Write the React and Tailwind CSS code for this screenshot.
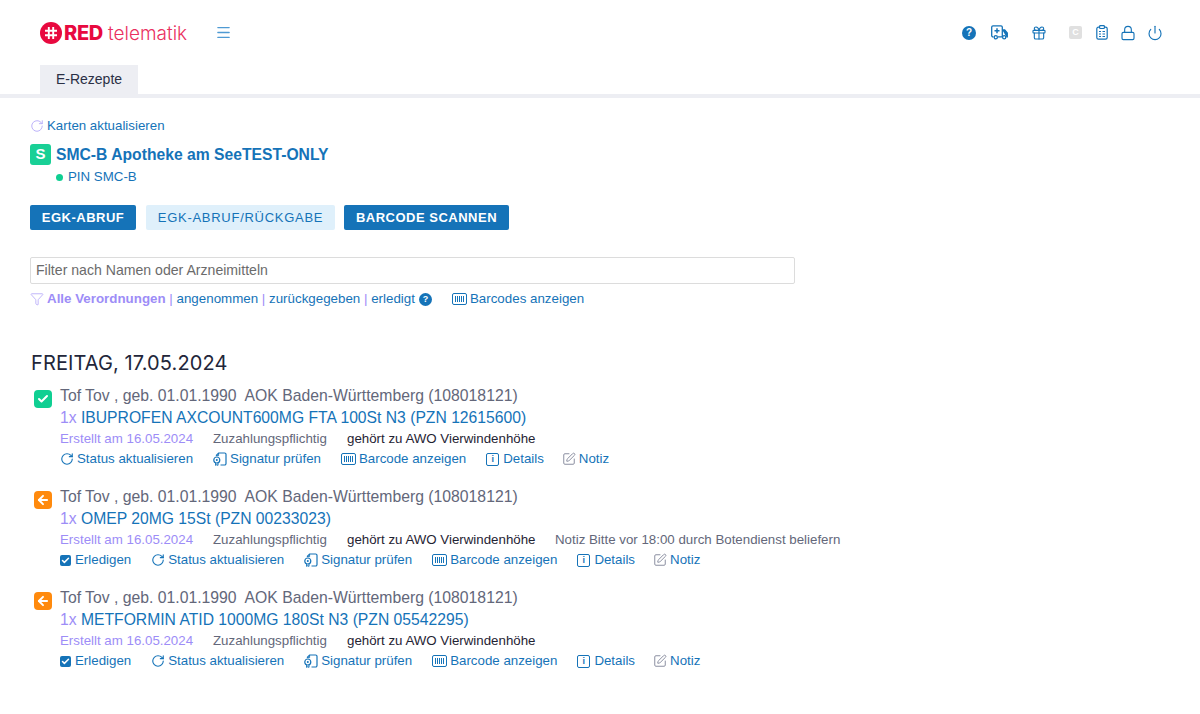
import React from "react";
import { Gift, Lock, Power, Menu, RotateCw, Filter, SquarePen, Check, ArrowLeft } from "lucide-react";

const blue = "#1573b8";

function BarcodeBox({ className = "" }) {
  return (
    <svg width="15" height="12" viewBox="0 0 15 12" fill="none" stroke="#1573b8" className={className}>
      <rect x="0.5" y="0.5" width="14" height="11" rx="1.5" />
      <path d="M3.5 3v6M5.5 3v6M7.5 3v6M9.5 3v6M11.5 3v6" />
    </svg>
  );
}

function SigIcon() {
  return (
    <svg width="14" height="14" viewBox="0 0 14 14" fill="none" stroke="#1573b8" strokeWidth="1.2">
      <path d="M3 3.6 5.6 1h6a1.4 1.4 0 0 1 1.4 1.4v9.2a1.4 1.4 0 0 1-1.4 1.4H7.5" />
      <path d="M3 3.6h2.6V1" strokeWidth="0.9" />
      <circle cx="3.8" cy="8" r="3" />
      <circle cx="3.8" cy="8" r="1" fill="#1573b8" stroke="none" />
      <path d="M2.6 11v2.4l1.2-.7 1.2.7V11" strokeWidth="1" />
    </svg>
  );
}

function AmbulanceIcon() {
  return (
    <svg width="17" height="16" viewBox="0 0 17 16" fill="none" stroke="#1573b8" strokeWidth="1.3" className="ml-[15px]">
      <path d="M2.5 11.8H2a1.3 1.3 0 0 1-1.3-1.3V2A1.3 1.3 0 0 1 2 .8h8A1.3 1.3 0 0 1 11.3 2v9.8H7" />
      <path d="M6 3.2v5M3.5 5.7h5" strokeWidth="1.5" />
      <path d="M11.3 5h2.4l2.6 3v3.8h-1" fill="#1573b8" />
      <circle cx="4.8" cy="12.3" r="1.6" fill="#fff" />
      <circle cx="13.2" cy="12.3" r="1.6" fill="#fff" />
    </svg>
  );
}

function ClipIcon() {
  return (
    <svg width="12" height="15" viewBox="0 0 12 15" fill="none" stroke="#1573b8" strokeWidth="1.2" className="ml-[14px]">
      <rect x="0.8" y="2.2" width="10.4" height="12" rx="1.6" />
      <rect x="3.6" y="0.7" width="4.8" height="2.8" rx="0.8" fill="#fff" />
      <path d="M3 6.5h2M6.5 6.5H9M3 9h2M6.5 9H9M3 11.5h2M6.5 11.5H9" strokeWidth="1" />
    </svg>
  );
}

function InfoBox() {
  return (
    <span className="w-[13px] h-[13px] border border-[#1573b8] rounded-[2px] flex items-center justify-center text-[9px] leading-none font-bold text-[#1573b8]">i</span>
  );
}

function Action({ icon, label, gap = "gap-[3px]", className = "" }) {
  return (
    <span className={`inline-flex items-center ${gap} text-[#1573b8] ${className}`}>
      {icon}
      <span>{label}</span>
    </span>
  );
}

function Prescription({ status, drug, note, done }) {
  return (
    <div className="flex">
      <div className="w-[30px] shrink-0 pl-[4px] pt-[5px]">
        {status === "ok" ? (
          <span className="w-[18px] h-[18px] rounded-[4px] bg-[#0fcf92] flex items-center justify-center">
            <Check size={12} color="#fff" strokeWidth={4} />
          </span>
        ) : (
          <span className="w-[18px] h-[18px] rounded-[4px] bg-[#ff8a0d] flex items-center justify-center">
            <ArrowLeft size={14} color="#fff" strokeWidth={3.4} />
          </span>
        )}
      </div>
      <div>
        <div className="text-[15.75px] leading-[22px] h-[22px] text-[#63677a] whitespace-pre">Tof Tov , geb. 01.01.1990{"  "}AOK Baden-Württemberg (108018121)</div>
        <div className="text-[15.7px] leading-[22px] h-[22px] text-[#1573b8]"><span className="text-[#9d8df7]">1x</span> {drug}</div>
        <div className="text-[13.3px] leading-[20px] h-[20px] flex text-[#63677a]">
          <span className="text-[#9d8df7] w-[153px]">Erstellt am 16.05.2024</span>
          <span className="w-[134px]">Zuzahlungspflichtig</span>
          <span className="text-[#1f2333] w-[208px]">gehört zu AWO Vierwindenhöhe</span>
          {note && <span>Notiz Bitte vor 18:00 durch Botendienst beliefern</span>}
        </div>
        <div className="text-[13.3px] leading-[20px] h-[20px] flex items-center gap-[20px]">
          {done && (
            <Action
              gap="gap-[4px]"
              icon={
                <span className="w-[11px] h-[11px] rounded-[2px] bg-[#1573b8] flex items-center justify-center">
                  <Check size={9} color="#fff" strokeWidth={4} />
                </span>
              }
              label="Erledigen"
            />
          )}
          <Action icon={<RotateCw size={14} color={blue} strokeWidth={1.9} />} label="Status aktualisieren" />
          <Action icon={<SigIcon />} label="Signatur prüfen" />
          <Action icon={<BarcodeBox />} label="Barcode anzeigen" />
          <Action gap="gap-[4px]" icon={<InfoBox />} label="Details" />
          <Action className="-ml-[2px]" icon={<SquarePen size={14} color="#8a8ea0" strokeWidth={1.7} />} label="Notiz" />
        </div>
      </div>
    </div>
  );
}

export default function App() {
  return (
    <div className="min-h-[714px] bg-white" style={{ fontFamily: '"Liberation Sans", Arial, sans-serif' }}>
      <header className="h-[65px] flex items-center justify-between pl-[40px] pr-[37px]">
        <div className="flex items-center">
          <span className="w-[22px] h-[22px] rounded-full bg-[#e8093f] flex items-center justify-center">
            <svg width="14" height="14" viewBox="0 0 14 14" stroke="#fff" strokeWidth="1.9" fill="none">
              <path d="M4.8 1v12M9.2 1v12M1 4.8h12M1 9.2h12" />
            </svg>
          </span>
          <span className="ml-[2px] w-[126px] whitespace-nowrap text-[19px] leading-none text-[#e8093f]" style={{ fontFamily: 'Inter, sans-serif' }}>
            <span className="font-extrabold text-[20px] tracking-[-0.3px]">RED</span>
            <span className="font-light text-[#ea2f60] ml-[5px]">telematik</span>
          </span>
          <Menu size={17} color="#4f9ad3" strokeWidth={1.8} className="ml-[25px]" />
        </div>
        <div className="flex items-center">
          <span className="w-[14px] h-[14px] rounded-full bg-[#1573b8] text-white text-[10px] font-bold flex items-center justify-center">?</span>
          <AmbulanceIcon />
          <Gift size={16} color={blue} strokeWidth={1.7} className="ml-[23px]" />
          <span className="ml-[22px] w-[13px] h-[13px] rounded-[2px] bg-[#e0e0e0] text-white text-[9px] font-bold flex items-center justify-center">C</span>
          <ClipIcon />
          <Lock size={16} color={blue} strokeWidth={1.7} className="ml-[12px]" />
          <Power size={16} color={blue} strokeWidth={1.7} className="ml-[11px]" />
        </div>
      </header>

      <nav className="pl-[40px] border-b-[4px] border-[#edeef3] h-[33px]">
        <div className="w-[98px] h-[29px] bg-[#edeef3] flex items-center justify-center text-[14px] text-[#2b3045]">E-Rezepte</div>
      </nav>

      <main className="pl-[30px] pt-[18px]">
        <div className="flex items-center gap-[3px] text-[13.3px] leading-[19px] text-[#1573b8]">
          <RotateCw size={14} color="#b4a8f8" strokeWidth={1.5} />
          <span>Karten aktualisieren</span>
        </div>

        <div className="mt-[9px] flex items-center">
          <span className="w-[21px] h-[21px] rounded-[3px] bg-[#19d096] text-white text-[15px] font-bold flex items-center justify-center">S</span>
          <span className="ml-[5px] text-[15.7px] leading-[20px] font-bold text-[#1573b8]">SMC-B Apotheke am SeeTEST-ONLY</span>
        </div>
        <div className="ml-[26px] mt-[3px] flex items-center gap-[5px] text-[13.3px] leading-[18px] text-[#1573b8]">
          <span className="w-[7px] h-[7px] rounded-full bg-[#0fcf92]"></span>
          <span>PIN SMC-B</span>
        </div>

        <div className="mt-[19px] flex text-[13px] tracking-[0.5px]">
          <button className="h-[25px] w-[106px] rounded-[2px] bg-[#1573b8] text-white font-bold">EGK-ABRUF</button>
          <button className="ml-[10px] h-[25px] w-[189px] rounded-[2px] bg-[#dff0fb] text-[#1573b8] tracking-[0.72px]">EGK-ABRUF/RÜCKGABE</button>
          <button className="ml-[9px] h-[25px] w-[165px] rounded-[2px] bg-[#1573b8] text-white font-bold">BARCODE SCANNEN</button>
        </div>

        <div className="mt-[27px] w-[765px] h-[27px] border border-[#dcdcdc] rounded-[2px] pl-[5px] pt-[1px] flex items-center text-[14.1px] text-[#6b6b6b]">Filter nach Namen oder Arzneimitteln</div>

        <div className="mt-[6px] flex items-center text-[13.35px] leading-[18px] text-[#1573b8] whitespace-pre">
          <Filter size={14} color="#a898f8" strokeWidth={1.2} />
          <span className="ml-[3px] font-bold text-[#9d8df7]">Alle Verordnungen</span>
          <span className="text-[#9d8df7]"> | </span><span>angenommen</span>
          <span className="text-[#9d8df7]"> | </span><span>zurückgegeben</span>
          <span className="text-[#9d8df7]"> | </span><span>erledigt</span>
          <span className="ml-[4px] w-[13px] h-[13px] rounded-full bg-[#1573b8] text-white text-[9px] font-bold flex items-center justify-center">?</span>
          <BarcodeBox className="ml-[20px]" />
          <span className="ml-[3px]">Barcodes anzeigen</span>
        </div>

        <h2 className="mt-[43px] ml-[1px] text-[20px] leading-[24px] tracking-[0.1px] text-[#22263a]" style={{ fontFamily: 'Inter, sans-serif' }}>FREITAG, 17.05.2024</h2>

        <div className="mt-[10px] flex flex-col gap-[17px]">
          <Prescription status="ok" drug="IBUPROFEN AXCOUNT600MG FTA 100St N3 (PZN 12615600)" />
          <Prescription status="back" drug="OMEP 20MG 15St (PZN 00233023)" note done />
          <Prescription status="back" drug="METFORMIN ATID 1000MG 180St N3 (PZN 05542295)" done />
        </div>
      </main>
    </div>
  );
}
